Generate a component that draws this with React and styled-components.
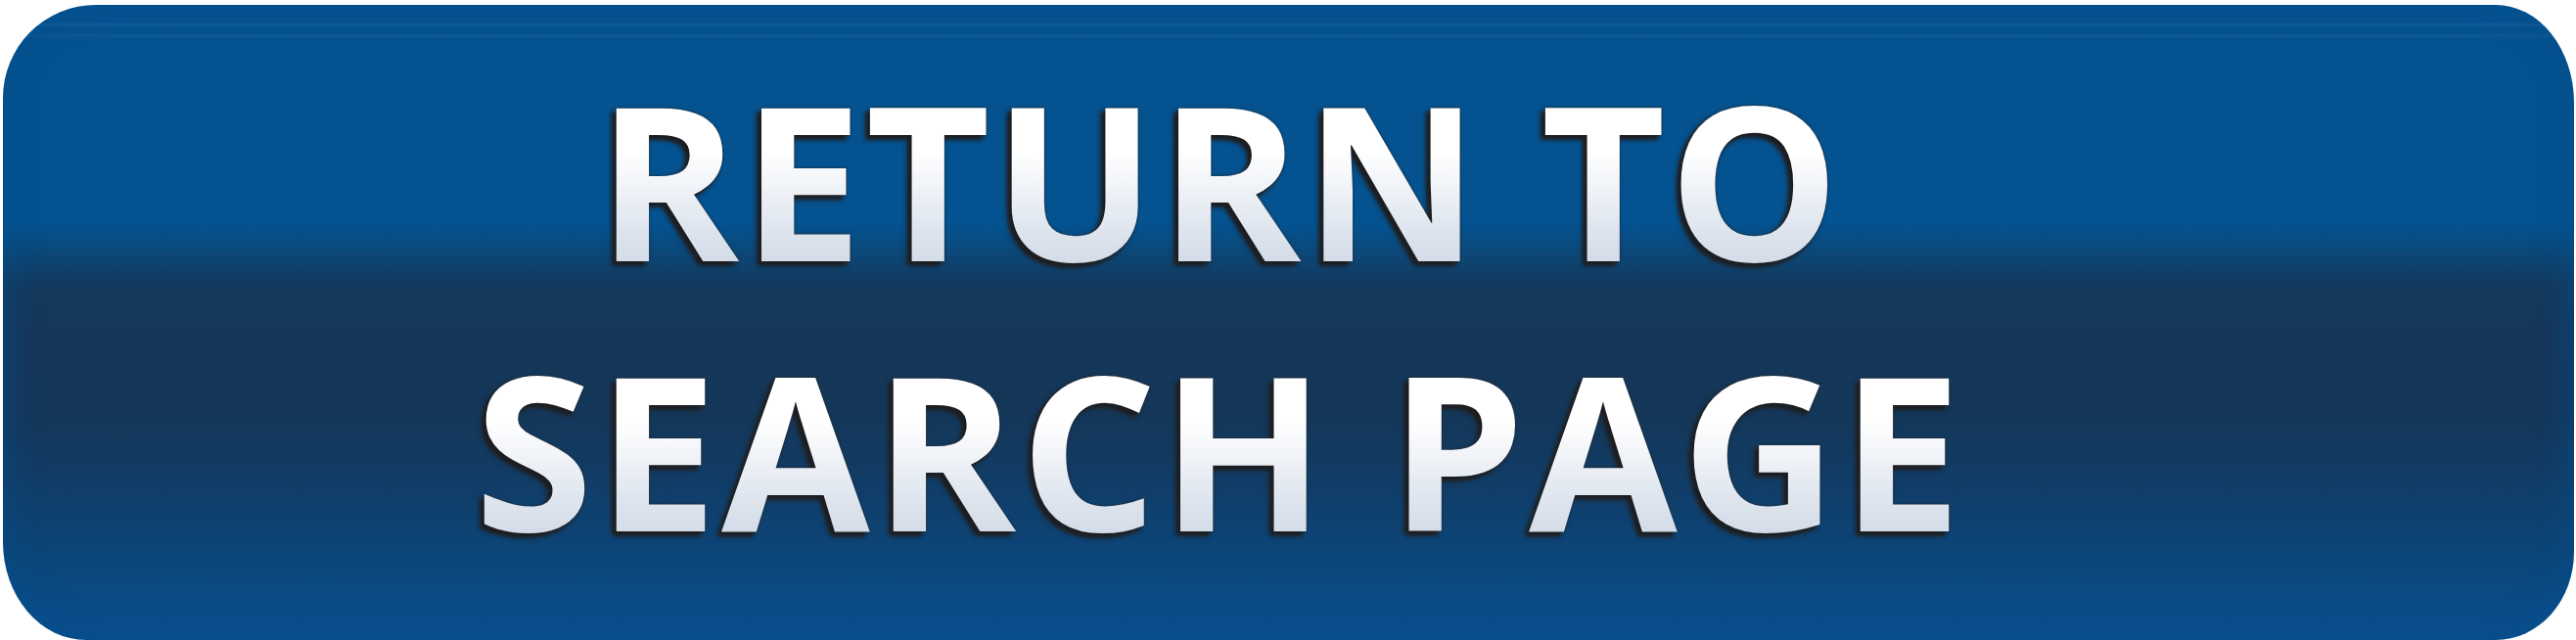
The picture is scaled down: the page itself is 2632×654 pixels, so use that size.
import React from "react";
import styled, { createGlobalStyle } from "styled-components";

const GlobalStyle = createGlobalStyle`
  html, body {
    margin: 0;
    padding: 0;
    background: #ffffff;
  }
`;

const Page = styled.div`
  width: 2632px;
  height: 654px;
  display: flex;
  padding: 5px 2px 0 3px;
  box-sizing: border-box;
`;

// the big glossy navy button
const BackButton = styled.a`
  flex: 1;
  display: flex;
  flex-direction: column;
  align-items: center;
  padding: 39px 140px 0 0;
  border-radius: 95px 80px 80px 85px / 95px 100px 90px 100px;
  text-decoration: none;
  cursor: pointer;
  background:
    linear-gradient(
      180deg,
      transparent 18px,
      rgba(120, 170, 215, 0.14) 20px,
      transparent 23px,
      transparent 29px,
      rgba(120, 170, 215, 0.1) 31px,
      transparent 34px
    ),
    linear-gradient(
      180deg,
      #04528f 0px,
      #04528f 225px,
      #0b4879 252px,
      #133a5e 285px,
      #15375a 330px,
      #143759 420px,
      #113c65 480px,
      #0c4578 560px,
      #0a4c88 620px,
      #0a4e8b 649px
    );
  box-shadow: inset 0 0 30px 6px rgba(6, 78, 140, 0.55);
`;

const Label = styled.span`
  display: block;
  font-family: "Open Sans", "Liberation Sans", sans-serif;
  font-weight: 700;
  font-size: 220px;
  line-height: 276px;
  white-space: nowrap;
  letter-spacing: ${(p) => p.$track || 0}px;
  background: linear-gradient(180deg, #ffffff 20%, #ffffff 40%, #dde4ee 70%, #cfd9e5 85%);
  -webkit-background-clip: text;
  background-clip: text;
  color: transparent;
  filter: drop-shadow(-4px 4px 2px #1b1d20) drop-shadow(0 0 1.5px #25272b);
`;

export default function App() {
  return (
    <>
      <GlobalStyle />
      <Page>
        <BackButton href="#search">
          <Label $track={3}>RETURN TO</Label>
          <Label $track={4}>SEARCH PAGE</Label>
        </BackButton>
      </Page>
    </>
  );
}
